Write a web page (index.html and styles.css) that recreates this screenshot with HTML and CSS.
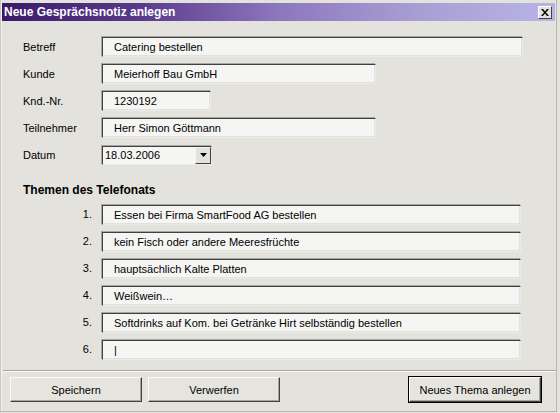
FILE: index.html
```html
<!DOCTYPE html>
<html lang="de">
<head>
<meta charset="utf-8">
<title>Neue Gesprächsnotiz anlegen</title>
<link rel="stylesheet" href="styles.css">
</head>
<body>
<div class="window">
  <div class="titlebar">
    <span class="title">Neue Gesprächsnotiz anlegen</span>
    <button class="close" type="button" aria-label="Schließen">
      <svg width="8" height="7" viewBox="0 0 8 7"><path d="M0 0h2l2 2.5L6 0h2L5 3.5 8 7H6L4 4.5 2 7H0l3-3.5z" fill="#000"/></svg>
    </button>
  </div>
  <div class="content">
    <div class="fields">
      <label class="lbl">Betreff</label>
      <div class="input w-betreff">Catering bestellen</div>
      <label class="lbl">Kunde</label>
      <div class="input w-mid">Meierhoff Bau GmbH</div>
      <label class="lbl">Knd.-Nr.</label>
      <div class="input w-small">1230192</div>
      <label class="lbl">Teilnehmer</label>
      <div class="input w-mid">Herr Simon Göttmann</div>
      <label class="lbl">Datum</label>
      <div class="combo">
        <span class="combo-text">18.03.2006</span>
        <span class="combo-btn"><svg width="7" height="4" viewBox="0 0 7 4"><path d="M0 0h7L3.5 4z" fill="#000"/></svg></span>
      </div>
    </div>
    <h2 class="heading">Themen des Telefonats</h2>
    <div class="topics">
      <span class="num">1.</span><div class="input w-topic">Essen bei Firma SmartFood AG bestellen</div>
      <span class="num">2.</span><div class="input w-topic">kein Fisch oder andere Meeresfrüchte</div>
      <span class="num">3.</span><div class="input w-topic">hauptsächlich Kalte Platten</div>
      <span class="num">4.</span><div class="input w-topic">Weißwein…</div>
      <span class="num">5.</span><div class="input w-topic">Softdrinks auf Kom. bei Getränke Hirt selbständig bestellen</div>
      <span class="num">6.</span><div class="input w-topic"><span class="caret">|</span></div>
    </div>
  </div>
  <div class="separator"></div>
  <div class="buttons">
    <button class="btn" type="button">Speichern</button>
    <button class="btn" type="button">Verwerfen</button>
    <span class="spacer"></span>
    <button class="btn default" type="button">Neues Thema anlegen</button>
  </div>
</div>
</body>
</html>
```

FILE: styles.css
```css
html, body {
  margin: 0;
  padding: 0;
  background: #e4e2dc;
}
body {
  font-family: "Liberation Sans", Arial, sans-serif;
  font-size: 11px;
  color: #000;
}
.window {
  width: 557px;
  height: 412px;
  box-sizing: border-box;
  padding-top: 3px;
  border-right: 1px solid #b8b6b0;
  border-bottom: 1px solid #b8b6b0;
  box-shadow: inset 1px 0 0 #c8c6c0, inset 2px 0 0 #f4f3ef;
  display: flex;
  flex-direction: column;
}
.titlebar {
  height: 18px;
  margin: 0 1px 0 2px;
  background: linear-gradient(90deg, #3b1b69 0%, #5a3a8c 25%, #8d77bd 50%, #a79ed4 75%, #b8b4e8 100%);
  display: flex;
  align-items: center;
  justify-content: space-between;
}
.title {
  color: #fff;
  font-weight: bold;
  font-size: 12px;
  padding-left: 2px;
}
.close {
  width: 14px;
  height: 13px;
  margin-right: 3px;
  padding: 0;
  background: #e4e2dc;
  border: 1px solid;
  border-color: #fff #404040 #404040 #fff;
  display: flex;
  align-items: center;
  justify-content: center;
}
.content {
  padding: 16px 0 0 23px;
}
.fields {
  display: grid;
  grid-template-columns: 79px auto;
  grid-auto-rows: 20px;
  row-gap: 7px;
  align-items: center;
  justify-items: start;
}
.lbl {
  line-height: 20px;
}
.input {
  height: 20px;
  box-sizing: border-box;
  background: #f5f5f3;
  border-top: 1px solid #404040;
  border-left: 1px solid #404040;
  border-right: 1px solid #ebeae6;
  border-bottom: 1px solid #ebeae6;
  box-shadow: -1px -1px 0 #a8a6a0, inset -1px -1px 0 #e2e1dc;
  padding-left: 11px;
  line-height: 19px;
  white-space: nowrap;
  overflow: hidden;
}
.w-betreff { width: 421px; }
.w-mid { width: 274px; }
.w-small { width: 109px; }
.w-topic { width: 419px; }
.combo {
  width: 110px;
  height: 19px;
  box-sizing: border-box;
  background: #f5f5f3;
  border-top: 1px solid #404040;
  border-left: 1px solid #404040;
  border-right: 1px solid #ebeae6;
  border-bottom: 1px solid #ebeae6;
  box-shadow: -1px -1px 0 #a8a6a0;
  display: flex;
  align-items: stretch;
}
.combo-text {
  flex: 1;
  padding-left: 2px;
  line-height: 17px;
}
.combo-btn {
  width: 16px;
  box-sizing: border-box;
  background: #e4e2dc;
  border: 1px solid;
  border-color: #f4f3ef #404040 #404040 #f4f3ef;
  display: flex;
  align-items: center;
  justify-content: center;
}
.heading {
  margin: 18px 0 8px 0;
  font-size: 12px;
  font-weight: bold;
  line-height: 14px;
}
.topics {
  display: grid;
  grid-template-columns: 69px 419px;
  column-gap: 10px;
  grid-auto-rows: 20px;
  row-gap: 7px;
  align-items: center;
}
.num {
  text-align: right;
  line-height: 20px;
  padding-bottom: 2px;
}
.caret {
  font-weight: normal;
}
.separator {
  margin: 10px 0 0 3px;
  height: 1px;
  background: #a8a6a0;
  border-bottom: 1px solid #faf9f6;
}
.buttons {
  display: flex;
  gap: 6px;
  padding: 5px 15px 0 10px;
}
.spacer {
  flex: 1;
}
.btn {
  width: 132px;
  height: 25px;
  box-sizing: border-box;
  font-family: "Liberation Sans", Arial, sans-serif;
  font-size: 11px;
  color: #000;
  background: #e6e4de;
  border: 1px solid;
  border-color: #faf9f6 #404040 #404040 #faf9f6;
  box-shadow: inset -1px -1px 0 #a8a6a0;
  padding: 0;
}
.btn.default {
  outline: 1px solid #000;
  outline-offset: 0;
}
```
